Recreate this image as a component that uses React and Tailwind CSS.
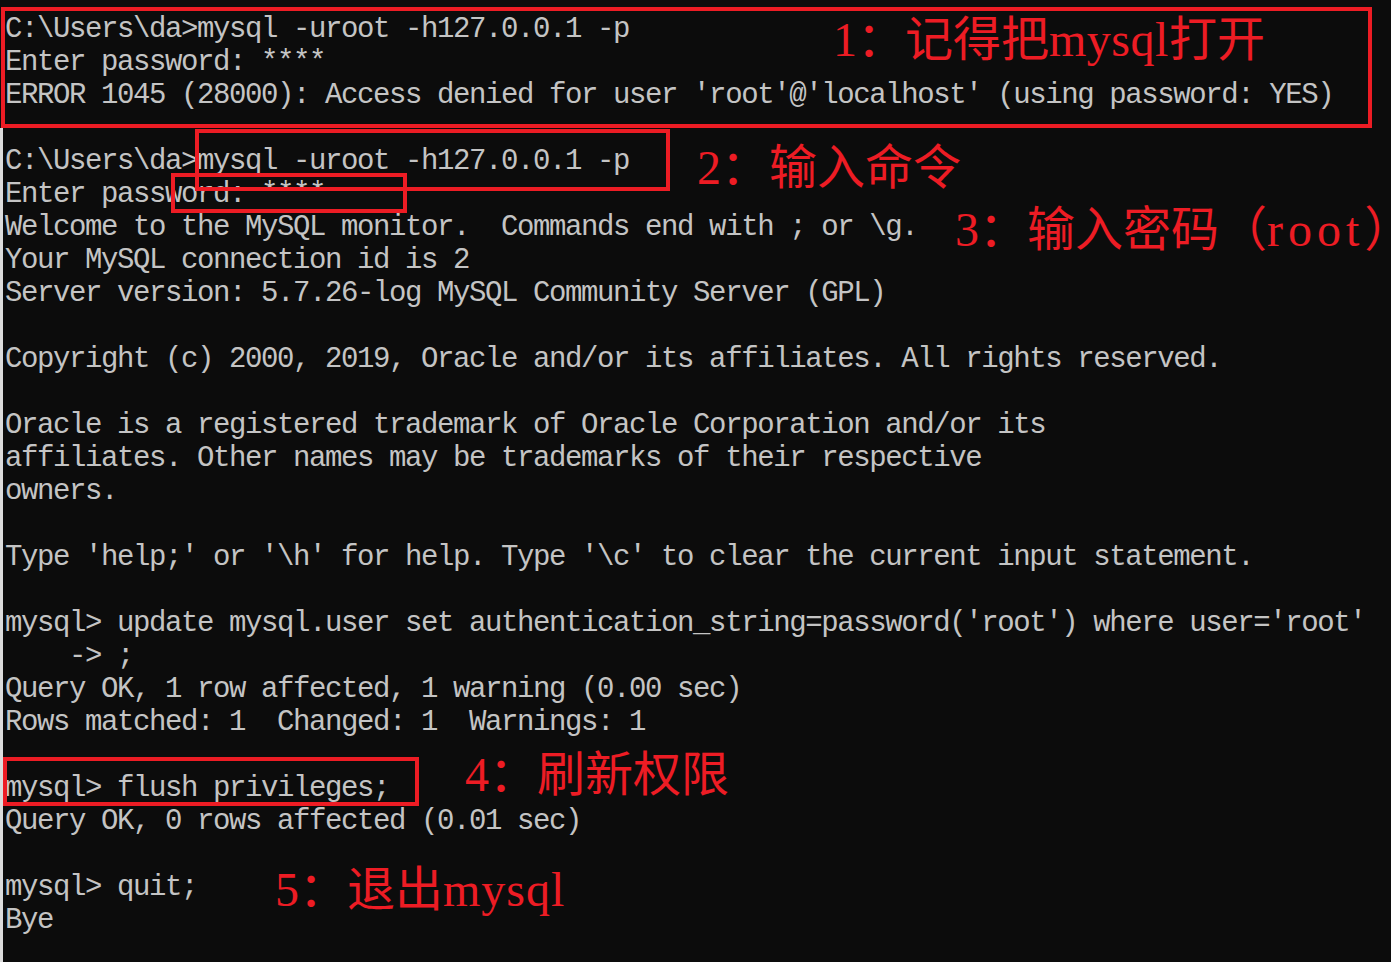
import React from "react";

const lines = [
  "C:\\Users\\da>mysql -uroot -h127.0.0.1 -p",
  "Enter password: ****",
  "ERROR 1045 (28000): Access denied for user 'root'@'localhost' (using password: YES)",
  "",
  "C:\\Users\\da>mysql -uroot -h127.0.0.1 -p",
  "Enter password: ****",
  "Welcome to the MySQL monitor.  Commands end with ; or \\g.",
  "Your MySQL connection id is 2",
  "Server version: 5.7.26-log MySQL Community Server (GPL)",
  "",
  "Copyright (c) 2000, 2019, Oracle and/or its affiliates. All rights reserved.",
  "",
  "Oracle is a registered trademark of Oracle Corporation and/or its",
  "affiliates. Other names may be trademarks of their respective",
  "owners.",
  "",
  "Type 'help;' or '\\h' for help. Type '\\c' to clear the current input statement.",
  "",
  "mysql> update mysql.user set authentication_string=password('root') where user='root'",
  "    -> ;",
  "Query OK, 1 row affected, 1 warning (0.00 sec)",
  "Rows matched: 1  Changed: 1  Warnings: 1",
  "",
  "mysql> flush privileges;",
  "Query OK, 0 rows affected (0.01 sec)",
  "",
  "mysql> quit;",
  "Bye",
];

// red callouts drawn over the console
const boxes = [
  "left-[1px] top-[7px] w-[1371px] h-[121px]",
  "left-[195px] top-[129px] w-[475px] h-[62px]",
  "left-[171px] top-[173px] w-[236px] h-[40px]",
  "left-[3px] top-[757px] w-[416px] h-[49px]",
];

const notes = [
  { text: <>1：记得把<span className="tracking-[0.5px]">mysql</span>打开</>, pos: "left-[833px] top-[16px]" },
  { text: "2：输入命令", pos: "left-[697px] top-[144px]" },
  { text: <>3：输入密码（<span className="tracking-[5px]">root</span>）</>, pos: "left-[955px] top-[206px]" },
  { text: "4：刷新权限", pos: "left-[465px] top-[751px]" },
  { text: <>5：退出<span className="tracking-[1px]">mysql</span></>, pos: "left-[275px] top-[866px]" },
];

export default function App() {
  return (
    <div className="relative h-[962px] w-full overflow-hidden bg-[#0c0c0c]">
      {/* window edge */}
      <div className="absolute left-0 top-[128px] bottom-0 w-[3px] bg-[#dcdcdc]" />

      {/* Console output */}
      <div className="pl-[5px] pt-[13px] font-['Liberation_Mono',monospace] text-[29px] leading-[33px] tracking-[-1.4px] text-[#c4c4c4]">
        {lines.map((line, i) => (
          <div key={i} className="h-[33px] whitespace-pre">
            {line}
          </div>
        ))}
      </div>

      {boxes.map((b, i) => (
        <div key={i} className={`absolute border-4 border-[#ed1c24] ${b}`} />
      ))}

      {notes.map((n, i) => (
        <div
          key={i}
          className={`absolute whitespace-nowrap font-['Liberation_Serif','Noto_Sans_CJK_SC',serif] text-[48px] leading-none text-[#ed1c24] ${n.pos}`}
        >
          {n.text}
        </div>
      ))}
    </div>
  );
}
